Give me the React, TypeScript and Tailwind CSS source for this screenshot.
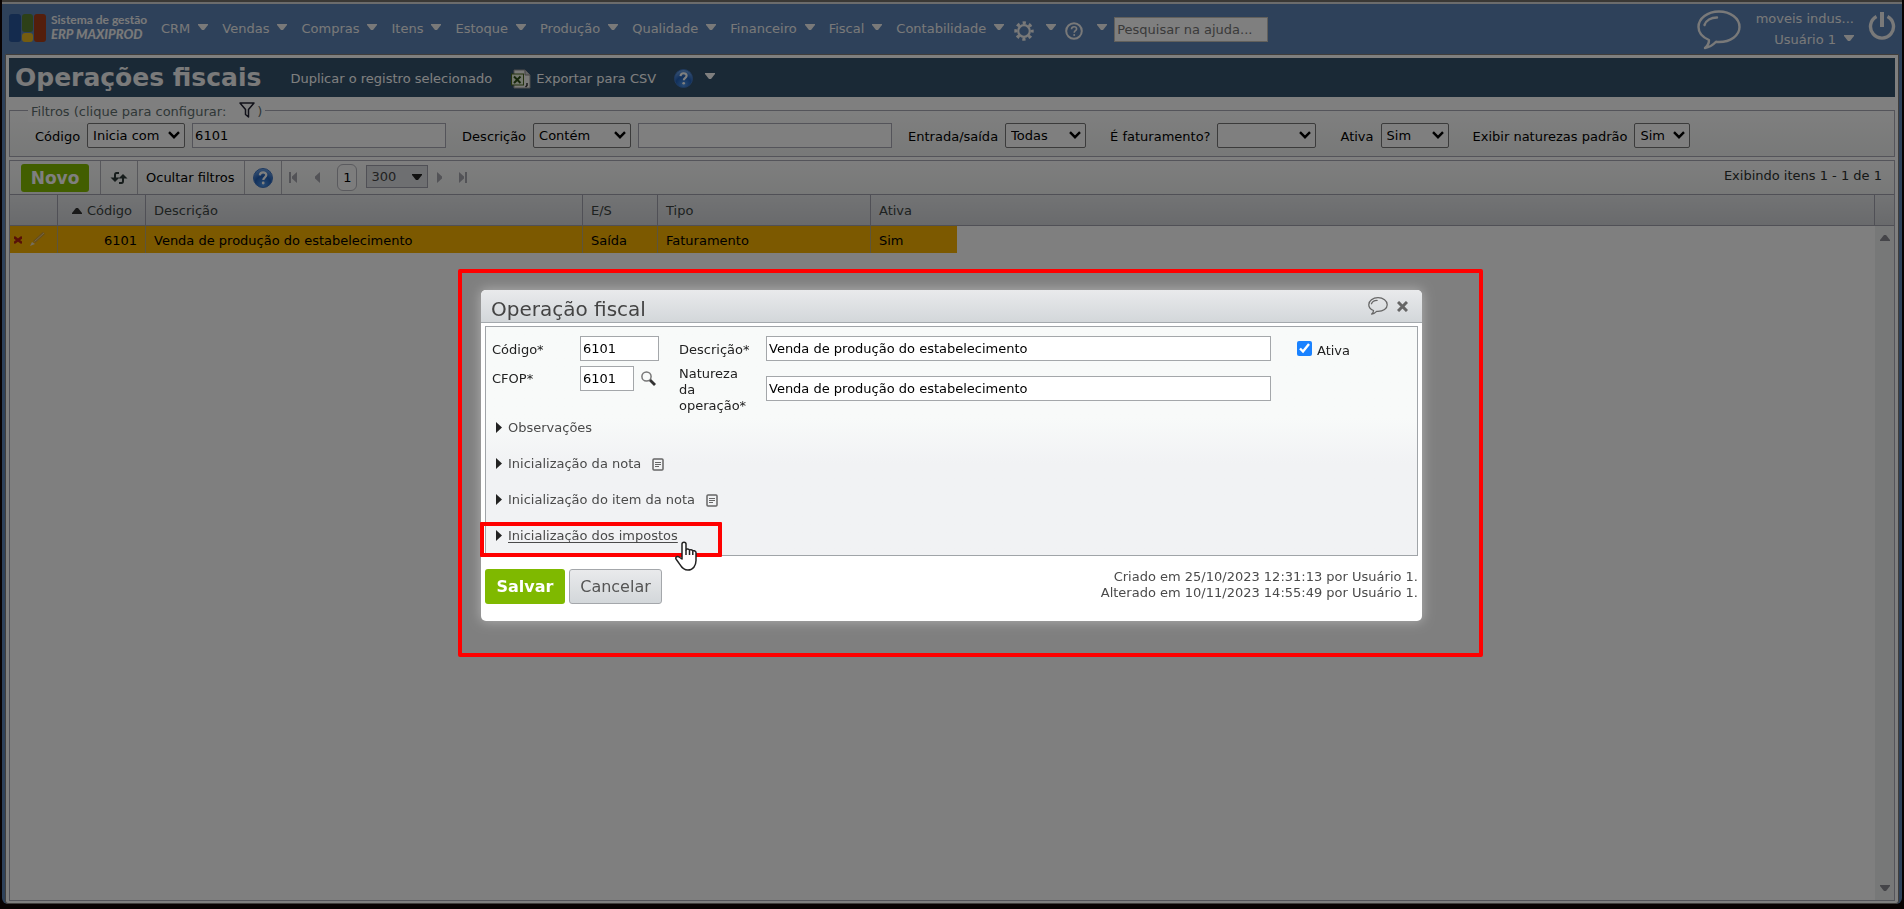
import type { ReactNode } from "react";

const MENU = ["CRM", "Vendas", "Compras", "Itens", "Estoque", "Produção", "Qualidade", "Financeiro", "Fiscal", "Contabilidade"];

function Caret({ className = "" }: { className?: string }) {
  return (
    <svg viewBox="0 0 10 6" className={`h-[6px] w-[10px] shrink-0 ${className}`} fill="currentColor" aria-hidden="true">
      <path d="M0 0h10v1L6 6H4L0 1z" />
    </svg>
  );
}

function Balloon({ className, stroke }: { className: string; stroke: number }) {
  return (
    <svg viewBox="0 0 44 40" className={className} fill="none" stroke="currentColor" strokeWidth={stroke} strokeLinejoin="round" strokeLinecap="round" aria-hidden="true">
      <path d="M12 30C5 27 1.500 22.500 1.500 17 1.500 8.500 10.500 1.500 22 1.500S42.500 8.500 42.500 17 33.500 32 22 32c-1 0-2 0-3-.2C16 35 12 37.500 8 38c3-2.500 4-5 4-8z" />
      <path d="M7.500 15C9 10.500 14 7.500 20 7.500" />
    </svg>
  );
}

function HelpBall({ className = "" }: { className?: string }) {
  return (
    <svg viewBox="0 0 20 20" className={`shrink-0 ${className}`} aria-hidden="true">
      <defs>
        <radialGradient id="ball" cx="50%" cy="85%" r="80%">
          <stop offset="0" stopColor="#4f96e8" />
          <stop offset="0.550" stopColor="#2260b8" />
          <stop offset="1" stopColor="#6ca0e4" />
        </radialGradient>
      </defs>
      <circle cx="10" cy="10" r="9.500" fill="url(#ball)" stroke="#3f74c0" />
      <path d="M6.800 7.400C7 5.300 8.300 4.400 10.100 4.400c1.900 0 3.200 1.100 3.200 2.700 0 2.200-3 2.300-3 4.800" fill="none" stroke="#fff" strokeWidth="2.200" />
      <circle cx="10.200" cy="15" r="1.400" fill="#fff" />
    </svg>
  );
}

function Select({ id, value, className, label }: { id: string; value: string; className: string; label?: string }) {
  return (
    <span className="relative inline-flex shrink-0">
      <select
        id={id}
        aria-label={label}
        defaultValue={value}
        className={`h-[25px] appearance-none rounded-xs border border-[#767676] bg-white pl-[5px] text-[13px] text-black ${className}`}
      >
        <option>{value}</option>
      </select>
      <svg viewBox="0 0 12 8" className="pointer-events-none absolute top-[8px] right-[5px] h-[8px] w-[12px]" fill="none" stroke="#000" strokeWidth="2.400" aria-hidden="true">
        <path d="M1 1.200l5 5 5-5" />
      </svg>
    </span>
  );
}

function Filter({ htmlFor, label, children }: { htmlFor: string; label: string; children: ReactNode }) {
  return (
    <div className="flex items-center gap-[7px]">
      <label htmlFor={htmlFor} className="pt-[2px] whitespace-nowrap">{label}</label>
      {children}
    </div>
  );
}

function Header() {
  return (
    <header className="flex h-[50px] shrink-0 items-start bg-[#5c82b4] pr-[6px] pl-[7px] text-[13px] text-[#f2f2f2]">
      <a href="#inicio" aria-label="ERP Maxiprod" className="mt-[9px] flex w-[139px] shrink-0 gap-[5px]">
        <svg viewBox="0 0 37 29" className="h-[29px] w-[37px]" aria-hidden="true">
          <rect x="0" y="1" width="12" height="28" rx="3" fill="#28569c" />
          <rect x="13" y="1" width="11" height="18" rx="3" fill="#5a8030" />
          <rect x="13" y="20" width="11" height="9" rx="3" fill="#e8b820" />
          <rect x="25" y="1" width="12" height="28" rx="3" fill="#a83c18" />
        </svg>
        <span className="flex flex-col font-['Lato',sans-serif] font-bold whitespace-nowrap">
          <span className="text-[12px] leading-[13px]">Sistema de gestão</span>
          <span className="text-[13px] leading-[17px] font-black italic">ERP MAXIPROD</span>
        </span>
      </a>
      <nav className="mt-[11px] ml-[13px] flex h-[28px] items-center" aria-label="Principal">
        {MENU.map((m) => (
          <button key={m} type="button" className="mr-[14px] flex items-center gap-[8px]">
            {m}
            <Caret className="mb-[4px]" />
          </button>
        ))}
        <button type="button" aria-label="Configurações" className="ml-[-4px] flex items-center gap-[12px]">
          <svg viewBox="0 0 20 20" className="mt-[3px] h-[20px] w-[20px]" fill="none" stroke="currentColor" aria-hidden="true">
            <circle cx="10" cy="10" r="5.800" strokeWidth="2.200" />
            <circle cx="10" cy="10" r="8.200" strokeWidth="3" strokeDasharray="3.220 3.220" strokeDashoffset="1.600" />
          </svg>
          <Caret className="mb-[4px]" />
        </button>
        <button type="button" aria-label="Ajuda" className="ml-[9px] flex items-center gap-[14px]">
          <svg viewBox="0 0 18 18" className="mt-[4px] h-[18px] w-[18px]" fill="none" stroke="currentColor" aria-hidden="true">
            <circle cx="9" cy="9" r="7.800" strokeWidth="2" />
            <path d="M6.500 7.200C6.600 5.500 7.600 4.700 9.100 4.700c1.500 0 2.500.9 2.500 2.200 0 1.800-2.400 1.900-2.400 3.800" strokeWidth="1.600" />
            <circle cx="9.200" cy="13" r="1" fill="currentColor" stroke="none" />
          </svg>
          <Caret className="mb-[4px]" />
        </button>
        <input
          type="text"
          aria-label="Pesquisar na ajuda"
          placeholder="Pesquisar na ajuda..."
          className="ml-[7px] h-[25px] w-[154px] border border-[#c4c0b8] bg-white px-[2px] placeholder:text-[#757575]"
        />
      </nav>
      <div className="ml-auto flex items-start">
        <button type="button" aria-label="Mensagens" className="mt-[6px]">
          <Balloon className="h-[40px] w-[44px]" stroke={2.4} />
        </button>
        <button type="button" className="mt-[4px] ml-[15px] text-right">
          <span className="block leading-[21px]">moveis indus...</span>
          <span className="flex items-center justify-end gap-[8px] leading-[21px]">
            Usuário 1 <Caret className="mb-[4px]" />
          </span>
        </button>
        <button type="button" aria-label="Sair" className="mt-[8px] ml-[14px]">
          <svg viewBox="0 0 28 29" className="h-[29px] w-[28px]" fill="none" stroke="currentColor" strokeWidth="3.400" aria-hidden="true">
            <path d="M8.500 4.500a11.500 11.500 0 1 0 11 0" />
            <path d="M14 0v15" strokeWidth="4" />
          </svg>
        </button>
      </div>
    </header>
  );
}

function TitleBar() {
  return (
    <div className="flex h-[39px] shrink-0 items-center bg-[#34526c] pl-[6px] text-[13px] text-white">
      <h1 className="text-[25px] leading-[39px] font-bold whitespace-nowrap text-[#f4f4f4]">Operações fiscais</h1>
      <div className="mt-[2px] ml-[29px] flex items-center">
        <button type="button">Duplicar o registro selecionado</button>
        <button type="button" className="ml-[19px] flex items-center gap-[5px]">
          <svg viewBox="0 0 20 20" className="h-[20px] w-[20px]" aria-hidden="true">
            <path d="M3 1h11l5 5v13H3z" fill="#f4f4f0" stroke="#999" />
            <path d="M14 1v5h5" fill="#ccc" stroke="#888" />
            <rect x="0.500" y="5" width="12" height="11" fill="#e8f0dc" stroke="#49661f" />
            <path d="M3 7.500l6.500 6.500M9.500 7.500L3 14" stroke="#2e4f16" strokeWidth="2" />
            <path d="M16 14v2.500l-1.500 1.500" stroke="#333" strokeWidth="1.500" fill="none" />
          </svg>
          Exportar para CSV
        </button>
        <button type="button" aria-label="Ajuda da tela" className="ml-[18px] flex items-center gap-[12px]">
          <HelpBall className="h-[19px] w-[19px]" />
          <Caret className="mb-[5px]" />
        </button>
      </div>
    </div>
  );
}

function Filters() {
  const input = "h-[25px] w-[254px] border border-[#a8a8b4] bg-white px-[2px] text-[13px]";
  return (
    <fieldset className="relative mt-[13px] h-[47px] shrink-0 border border-[#a8a8b4] bg-linear-to-b from-white to-[#f0f2f1] pt-[12px] pl-[25px] text-[13px]">
      <legend className="absolute top-[-9px] left-[18px] flex items-center bg-white px-[3px] leading-[20px] whitespace-nowrap text-[#5f6f6f]">
        Filtros (clique para configurar:
        <svg viewBox="0 0 16 16" className="mb-[4px] ml-[13px] h-[16px] w-[16px]" fill="none" stroke="#223" strokeWidth="1.500" strokeLinejoin="round" aria-hidden="true">
          <path d="M1 1h14L9.500 7.500V15L6.500 12.500v-5z" />
        </svg>
        <span className="ml-[2px]">)</span>
      </legend>
      <div className="flex items-center">
        <Filter htmlFor="f-codigo" label="Código">
          <Select id="f-op-codigo" label="Operador de código" value="Inicia com" className="w-[98px]" />
          <input id="f-codigo" type="text" defaultValue="6101" className={input} />
        </Filter>
        <div className="w-[16px]" />
        <Filter htmlFor="f-descricao" label="Descrição">
          <Select id="f-op-descricao" label="Operador de descrição" value="Contém" className="w-[98px]" />
          <input id="f-descricao" type="text" className={input} />
        </Filter>
        <div className="w-[16px]" />
        <Filter htmlFor="f-es" label="Entrada/saída">
          <Select id="f-es" value="Todas" className="w-[81px]" />
        </Filter>
        <div className="w-[24px]" />
        <Filter htmlFor="f-fat" label="É faturamento?">
          <Select id="f-fat" value="" className="w-[99px]" />
        </Filter>
        <div className="w-[24px]" />
        <Filter htmlFor="f-ativa" label="Ativa">
          <Select id="f-ativa" value="Sim" className="w-[68px]" />
        </Filter>
        <div className="w-[24px]" />
        <Filter htmlFor="f-padrao" label="Exibir naturezas padrão">
          <Select id="f-padrao" value="Sim" className="w-[56px]" />
        </Filter>
      </div>
    </fieldset>
  );
}

function PageArrow({ dir, bar, label }: { dir: "left" | "right"; bar?: boolean; label: string }) {
  return (
    <button type="button" aria-label={label}>
      <svg viewBox="0 0 9 11" className={dir === "left" ? "h-[11px] w-[9px]" : "h-[11px] w-[9px] rotate-180"} fill="#a6a6ae" aria-hidden="true">
        <path d="M8 0v11L3 6.500v-2z" />
        {bar && <path d="M0 0h2v11H0z" />}
      </svg>
    </button>
  );
}

function Toolbar() {
  return (
    <div className="flex h-[34px] shrink-0 items-stretch border-b border-[#a0a0ac] bg-linear-to-b from-[#fdfdfd] to-[#eff1f0] pr-[12px] text-[13px] text-black">
      <div className="flex items-center pr-[11px] pl-[11px]">
        <button type="button" className="h-[28px] w-[68px] rounded-[3px] bg-[#84bc00] text-[17px] leading-[28px] font-bold text-white">Novo</button>
      </div>
      <div className="flex w-[37px] items-center justify-center border-l border-[#b0b0b8]">
        <button type="button" aria-label="Atualizar">
          <svg viewBox="0 0 18 14" className="h-[14px] w-[18px]" fill="none" stroke="#2f3a38" strokeWidth="2" aria-hidden="true">
            <path d="M9 2H6.500Q5 2 5 4v3" />
            <path d="M0.500 6.500h9L5 11z" fill="#2f3a38" stroke="none" />
            <path d="M9 12h2.500Q13 12 13 10V7" />
            <path d="M8.500 7.500h9L13 3z" fill="#2f3a38" stroke="none" />
          </svg>
        </button>
      </div>
      <button type="button" className="border-l border-[#b0b0b8] pr-[10px] pl-[8px] whitespace-nowrap">Ocultar filtros</button>
      <div className="flex items-center border-l border-[#b0b0b8] px-[8px]">
        <button type="button" aria-label="Ajuda da lista"><HelpBall className="h-[20px] w-[20px]" /></button>
      </div>
      <div className="flex items-center border-l border-[#b0b0b8] pl-[7px]">
        <PageArrow dir="left" bar label="Primeira página" />
        <span className="w-[14px]" />
        <PageArrow dir="left" label="Página anterior" />
        <button type="button" className="ml-[16px] h-[27px] w-[20px] rounded-[6px] border border-[#b4b4bc] bg-[#fafafa]">1</button>
        <span className="relative ml-[9px] inline-flex">
          <select aria-label="Itens por página" defaultValue="300" className="mb-[2px] h-[23px] w-[62px] appearance-none border border-[#a0a0ac] bg-[#dcdee2] pl-[4px] text-[#444]">
            <option>300</option>
          </select>
          <Caret className="pointer-events-none absolute top-[9px] right-[6px] text-[#222]" />
        </span>
        <span className="w-[8px]" />
        <PageArrow dir="right" label="Próxima página" />
        <span className="w-[13px]" />
        <PageArrow dir="right" bar label="Última página" />
      </div>
      <p className="mt-[6px] ml-auto leading-[18px] text-[#2c302e]">Exibindo itens 1 - 1 de 1</p>
    </div>
  );
}

function Grid() {
  const th = "border-r border-b border-[#a0a0ac] px-[8px] pt-[2px] text-left font-normal";
  const td = "border-r border-[#b8a878] bg-[#f8b200] px-[8px] pt-[2px]";
  return (
    <section className="mt-[3px] flex min-h-0 flex-1 flex-col border border-[#a8a8b4]" aria-label="Lista de operações fiscais">
      <Toolbar />
      <div className="flex min-h-0 flex-1">
        <div className="min-w-0 flex-1 bg-white">
          <table className="w-full table-fixed border-separate border-spacing-0 text-[13px]">
            <colgroup>
              <col className="w-[48px]" />
              <col className="w-[88px]" />
              <col className="w-[437px]" />
              <col className="w-[75px]" />
              <col className="w-[213px]" />
              <col className="w-[86px]" />
              <col />
            </colgroup>
            <thead>
              <tr className="h-[31px] bg-linear-to-b from-[#e6e8ea] to-[#d2d4d8] text-[#3c4442]">
                <th className={th} aria-label="Ações" />
                <th className={th}>
                  <span className="flex items-center justify-end gap-[5px] pr-[5px]">
                    <svg viewBox="0 0 10 6" className="h-[6px] w-[10px]" fill="#333" aria-hidden="true"><path d="M0 6h10v-1L6 0H4L0 5z" /></svg>
                    Código
                  </span>
                </th>
                <th className={th}>Descrição</th>
                <th className={th}>E/S</th>
                <th className={th}>Tipo</th>
                <th className="border-b border-[#a0a0ac] px-[8px] pt-[2px] text-left font-normal">Ativa</th>
                <th className="border-r border-b border-[#a0a0ac]" aria-label="Vazia" />
              </tr>
            </thead>
            <tbody>
              <tr className="h-[27px] text-black">
                <td className="border-r border-[#b8a878] bg-[#f8b200] px-[4px]">
                  <span className="flex items-center gap-[8px]">
                    <button type="button" aria-label="Excluir">
                      <svg viewBox="0 0 8 8" className="h-[8px] w-[8px]" stroke="#b02010" strokeWidth="2.600" aria-hidden="true"><path d="M0 1l8 6M8 1L0 7" /></svg>
                    </button>
                    <button type="button" aria-label="Editar">
                      <svg viewBox="0 0 16 15" className="h-[15px] w-[16px]" fill="none" aria-hidden="true">
                        <path d="M4 10L14 1" stroke="#c89a3c" strokeWidth="3" />
                        <path d="M4.500 9.500L14 1" stroke="#f0cf80" strokeWidth="1" />
                        <path d="M0 14l2-4 3 2z" fill="#e8dcc0" />
                      </svg>
                    </button>
                  </span>
                </td>
                <td className={`${td} text-right`}>6101</td>
                <td className={td}>Venda de produção do estabelecimento</td>
                <td className={td}>Saída</td>
                <td className={td}>Faturamento</td>
                <td className="bg-[#f8b200] px-[8px] pt-[2px]">Sim</td>
                <td />
              </tr>
            </tbody>
          </table>
        </div>
        <div className="flex w-[19px] shrink-0 flex-col text-[#8a8a92]">
          <div className="h-[31px] border-b border-[#a0a0ac] bg-linear-to-b from-[#e6e8ea] to-[#d2d4d8]" />
          <div className="flex flex-1 flex-col items-center justify-between bg-[#eff1f0] py-[9px]">
            <Caret className="rotate-180" />
            <Caret />
          </div>
        </div>
      </div>
    </section>
  );
}

function Note() {
  return (
    <svg viewBox="0 0 12 13" className="ml-[11px] h-[13px] w-[12px]" fill="none" stroke="#666" aria-hidden="true">
      <rect x="1" y="1" width="10" height="11" rx="1" strokeWidth="1.500" />
      <path d="M3 4.500h6M3 6.500h6M3 8.500h4" />
    </svg>
  );
}

function Section({ title, note, active }: { title: string; note?: boolean; active?: boolean }) {
  return (
    <li className="relative flex h-[36px] items-center">
      <button type="button" className="flex items-center">
        <svg viewBox="0 0 6 11" className="mb-[2px] ml-[4px] h-[11px] w-[6px]" fill="#222" aria-hidden="true"><path d="M0 0l6 5.500L0 11z" /></svg>
        <span className={active ? "ml-[6px] underline underline-offset-2" : "ml-[6px]"}>{title}</span>
        {note && <Note />}
      </button>
      {active && (
        <>
          <span className="pointer-events-none absolute top-[4px] left-[-12px] h-[35px] w-[242px] rounded-[1px] border-4 border-[#ff0000]" />
          <svg viewBox="0 0 22 30" className="pointer-events-none absolute top-[23px] left-[183px] h-[30px] w-[22px]" fill="#fff" stroke="#222" strokeWidth="1.500" strokeLinejoin="round" aria-hidden="true">
            <path d="M7 18V3c0-2.500 4-2.500 4 0v6c0-1.500 3.500-1.200 3.500.6 0-1.300 3.300-1 3.300.8 0-1.200 3.200-.8 3.200 1.200v8c0 5-3 9.400-8 9.400-4 0-6-2-8-5.400L1 18c-1-2.500 2-3 3-2z" />
            <path d="M11 9v5M14.500 10v4M17.800 11v3" fill="none" />
          </svg>
        </>
      )}
    </li>
  );
}

function Dialog() {
  const input = "h-[25px] border border-[#a4a7aa] bg-white px-[2px] text-black";
  return (
    <div className="fixed inset-0 flex items-center justify-center bg-black/50 pt-[2px] pr-[1px]">
      <div role="dialog" aria-labelledby="dlg-title" className="relative w-[941px] max-w-full rounded-[5px] bg-white text-[13px] text-[#222] shadow-[0_0_12px_1px_rgba(255,255,255,0.35)]">
        <div className="flex h-[33px] items-center rounded-t-[5px] border-b border-[#a4a9ad] bg-linear-to-b from-[#e9eaec] to-[#d3d7da] pr-[14px] pl-[10px] text-[#444]">
          <h2 id="dlg-title" className="mt-[6px] text-[20px] leading-[24px]">Operação fiscal</h2>
          <button type="button" aria-label="Comentários" className="ml-auto"><Balloon className="h-[18px] w-[20px] text-[#666]" stroke={2.8} /></button>
          <button type="button" aria-label="Fechar" className="ml-[9px]">
            <svg viewBox="0 0 11 11" className="h-[11px] w-[11px]" stroke="#666" strokeWidth="3" aria-hidden="true"><path d="M1 1l9 9M10 1l-9 9" /></svg>
          </button>
        </div>
        <div className="mx-[4px] mt-[3px] h-[230px] border border-[#a0a4a8] bg-linear-to-b from-[#f8faf9] from-40% to-[#f1f2f4] to-60% pt-[9px] pl-[6px]">
          <div className="grid grid-cols-[88px_99px_87px_1fr_146px] gap-y-[4px]">
            <label htmlFor="d-codigo" className="pt-[1px] leading-[25px]">Código*</label>
            <input id="d-codigo" type="text" defaultValue="6101" className={`${input} w-[79px]`} />
            <label htmlFor="d-descricao" className="pt-[1px] leading-[25px]">Descrição*</label>
            <input id="d-descricao" type="text" defaultValue="Venda de produção do estabelecimento" className={`${input} w-full`} />
            <label className="flex items-center gap-[5px] pl-[26px]">
              <input type="checkbox" defaultChecked className="mb-[2px] h-[15px] w-[15px] accent-[#1a82ff]" />
              <span className="pt-[3px]">Ativa</span>
            </label>
            <label htmlFor="d-cfop" className="leading-[25px]">CFOP*</label>
            <div className="flex h-[25px] items-center">
              <input id="d-cfop" type="text" defaultValue="6101" className={`${input} w-[54px]`} />
              <button type="button" aria-label="Buscar CFOP" className="ml-[7px]">
                <svg viewBox="0 0 15 15" className="h-[15px] w-[15px]" fill="none" aria-hidden="true">
                  <circle cx="5.500" cy="5.500" r="4.600" stroke="#777" strokeWidth="1.500" />
                  <path d="M9 9l5 5" stroke="#333" strokeWidth="2.800" />
                </svg>
              </button>
            </div>
            <label htmlFor="d-natureza" className="w-[70px] leading-[16px]">Natureza da operação*</label>
            <input id="d-natureza" type="text" defaultValue="Venda de produção do estabelecimento" className={`${input} mt-[10px] w-full`} />
          </div>
          <ul className="mt-[-4px] text-[#4a4a4a]">
            <Section title="Observações" />
            <Section title="Inicialização da nota" note />
            <Section title="Inicialização do item da nota" note />
            <Section title="Inicialização dos impostos" active />
          </ul>
        </div>
        <div className="flex items-start px-[4px] pt-[13px] pb-[17px]">
          <button type="button" className="h-[35px] w-[80px] rounded-[3px] bg-[#7fb900] text-[16px] font-bold text-white">Salvar</button>
          <button type="button" className="ml-[4px] h-[35px] w-[93px] rounded-[3px] border border-[#a4a7ab] bg-linear-to-b from-[#e9eaec] to-[#d3d7da] text-[16px] text-[#555]">Cancelar</button>
          <p className="ml-auto text-right leading-[16px] text-[#4a4a4a]">
            Criado em 25/10/2023 12:31:13 por Usuário 1.
            <br />
            Alterado em 10/11/2023 14:55:49 por Usuário 1.
          </p>
        </div>
        <span className="pointer-events-none absolute top-[-21px] right-[-61px] bottom-[-36px] left-[-23px] rounded-[2px] border-4 border-[#ff0000]" />
      </div>
    </div>
  );
}

export default function App() {
  return (
    <div className="flex h-screen flex-col overflow-hidden bg-[#100404] pr-[2px] pb-[5px] pl-[2px] font-['DejaVu_Sans',Verdana,sans-serif]">
      <div className="h-[4px] shrink-0 border-t-2 border-[#74706a] bg-[#d8d8d8]" />
      <div className="flex min-h-0 flex-1 flex-col rounded-b-[6px] bg-[#5c82b4]">
        <Header />
        <main className="mx-[3px] flex min-h-0 flex-1 flex-col rounded-b-[3px] border border-[#807c78] bg-white px-[3px] pt-[3px] pb-[2px]">
          <TitleBar />
          <Filters />
          <Grid />
        </main>
      </div>
      <Dialog />
    </div>
  );
}
